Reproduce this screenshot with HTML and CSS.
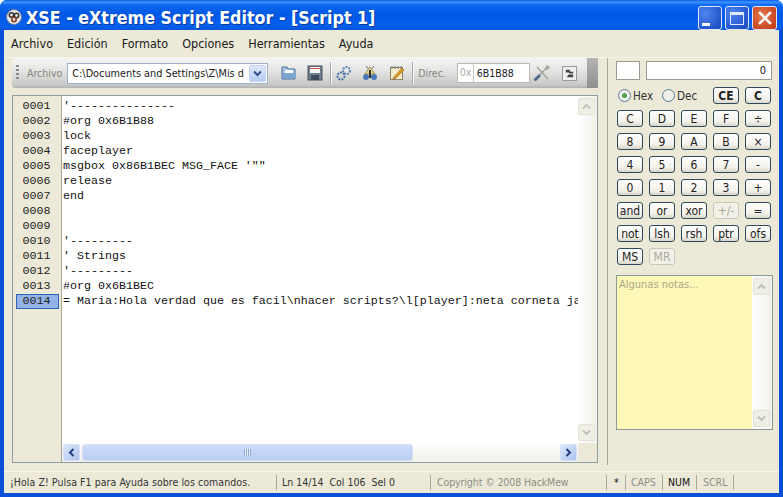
FILE: index.html
```html
<!DOCTYPE html>
<html lang="es">
<head>
<meta charset="utf-8">
<title>XSE - eXtreme Script Editor</title>
<link rel="stylesheet" href="styles.css">
</head>
<body>
<div class="window">
  <header class="titlebar">
    <svg class="app-icon" viewBox="0 0 16 16" width="16" height="16"><circle cx="8" cy="8" r="7.5" fill="#e8e8e8" stroke="#6a7a9a"/><circle cx="5.5" cy="6" r="2.2" fill="none" stroke="#333" stroke-width="1.6"/><circle cx="10.5" cy="6.5" r="2.2" fill="none" stroke="#333" stroke-width="1.6"/><circle cx="8" cy="10.5" r="2.2" fill="none" stroke="#8a3a20" stroke-width="1.6"/></svg>
    <span class="title-text">XSE - eXtreme Script Editor - [Script 1]</span>
    <div class="caption-buttons">
      <div class="cap cap-blue"><span class="cap-min"></span></div>
      <div class="cap cap-blue"><span class="cap-max"></span></div>
      <div class="cap cap-red"><svg viewBox="0 0 14 14" width="14" height="14"><path d="M2 2l10 10M12 2L2 12" stroke="#fff" stroke-width="2.6" stroke-linecap="square"/></svg></div>
    </div>
  </header>
  <div class="client">
    <nav class="menubar">
      <span>Archivo</span><span>Edición</span><span>Formato</span><span>Opciones</span><span>Herramientas</span><span>Ayuda</span>
    </nav>
    <div class="workspace">
      <div class="left">
        <div class="toolbar">
          <span class="grip"></span>
          <span class="tb-label tb-archivo">Archivo</span>
          <div class="combo"><span class="combo-text">C:\Documents and Settings\Z\Mis d</span><span class="combo-btn"><svg viewBox="0 0 9 7" width="9" height="7"><path d="M1 1.5l3.5 3.5L8 1.5" fill="none" stroke="#33508c" stroke-width="2"/></svg></span></div>
          <svg class="ico ico-folder" viewBox="0 0 16 16" width="16" height="16"><path d="M1 2h5l1 2h7v10H1z" fill="#a9c3e0" stroke="#4a6f99"/><rect x="4" y="5" width="8" height="3" fill="#fff"/><rect x="1.5" y="8" width="13" height="5.5" fill="#7ba6d2"/></svg>
          <svg class="ico ico-floppy" viewBox="0 0 16 16" width="16" height="16"><rect x="1" y="1" width="14" height="14" fill="#6f7f92" stroke="#47505c"/><rect x="3" y="2" width="10" height="6" fill="#f4f4f4"/><rect x="3" y="3" width="10" height="1" fill="#d9534f"/><rect x="4" y="10" width="8" height="5" fill="#3d4a5a"/></svg>
          <span class="tb-sep"></span>
          <svg class="ico ico-gears" viewBox="0 0 16 16" width="16" height="16"><circle cx="10.5" cy="5.5" r="3.5" fill="none" stroke="#5b86b8" stroke-width="2" stroke-dasharray="2 1"/><circle cx="5" cy="11" r="3.5" fill="none" stroke="#4a74a8" stroke-width="2" stroke-dasharray="2 1"/></svg>
          <svg class="ico ico-bug" viewBox="0 0 16 16" width="16" height="16"><path d="M4 1l3 4M12 1L9 5" stroke="#777"/><path d="M8 2L3 9h10z" fill="#e8d89a" stroke="#a58f4a"/><circle cx="4" cy="12" r="3" fill="#4a78b8"/><circle cx="12" cy="12" r="3" fill="#4a78b8"/><rect x="7" y="5" width="2" height="8" fill="#333"/></svg>
          <svg class="ico ico-note" viewBox="0 0 16 16" width="16" height="16"><rect x="1.5" y="2.5" width="12" height="12" fill="#f4ecc8" stroke="#8b8468"/><path d="M3 1v3M6 1v3M9 1v3M12 1v3" stroke="#777"/><path d="M5 12l8-9 2 2-8 8-3 1z" fill="#e0a020" stroke="#8a5a10" stroke-width=".6"/></svg>
          <span class="tb-sep tb-sep2"></span>
          <span class="tb-label tb-direc">Direc.</span>
          <div class="addr"><span class="addr-prefix">0x</span><span class="addr-value">6B1B88</span></div>
          <svg class="ico ico-tools" viewBox="0 0 16 16" width="16" height="16"><path d="M3 2l11 12" stroke="#a4a4a0" stroke-width="1.6"/><path d="M14 2L4 11" stroke="#a4a4a0" stroke-width="1.6"/><path d="M1.5 14.5l3.5-3.5" stroke="#50688c" stroke-width="3" stroke-linecap="round"/><circle cx="13.5" cy="2.5" r="1.6" fill="none" stroke="#8a8a86"/></svg>
          <div class="ico-box"><svg viewBox="0 0 12 12" width="11" height="11"><path d="M2 2h4l1 2h3v2H6L5 5H2zM5 7h5v3H3z" fill="#444"/></svg></div>
          <span class="tb-end"></span>
        </div>
        <div class="editor">
          <div class="editor-top">
            <div class="gutter">
              <div>0001</div><div>0002</div><div>0003</div><div>0004</div><div>0005</div><div>0006</div><div>0007</div><div>0008</div><div>0009</div><div>0010</div><div>0011</div><div>0012</div><div>0013</div><div class="active">0014</div>
            </div>
            <div class="code-wrap">
              <pre class="code">'---------------
#org 0x6B1B88
lock
faceplayer
msgbox 0x86B1BEC MSG_FACE '""
release
end


'---------
' Strings
'---------
#org 0x6B1BEC
= Maria:Hola verdad que es facil\nhacer scripts?\l[player]:neta corneta ja</pre>
            </div>
            <div class="vscroll">
              <span class="sb-btn sb-off"><svg viewBox="0 0 9 7" width="9" height="7"><path d="M1 5.5L4.5 2 8 5.5" fill="none" stroke="#c2c2b8" stroke-width="2"/></svg></span>
              <span class="sb-btn sb-off"><svg viewBox="0 0 9 7" width="9" height="7"><path d="M1 1.5L4.5 5 8 1.5" fill="none" stroke="#c2c2b8" stroke-width="2"/></svg></span>
            </div>
          </div>
          <div class="editor-bottom">
            <div class="gutter-foot"></div>
            <div class="hscroll">
              <span class="sb-btn sb-on"><svg viewBox="0 0 7 9" width="7" height="9"><path d="M5.5 1L2 4.5 5.5 8" fill="none" stroke="#25407a" stroke-width="2"/></svg></span>
              <span class="thumb"><span class="thumb-grip"></span></span>
              <span class="sb-btn sb-on"><svg viewBox="0 0 7 9" width="7" height="9"><path d="M1.5 1L5 4.5 1.5 8" fill="none" stroke="#25407a" stroke-width="2"/></svg></span>
            </div>
            <div class="corner"></div>
          </div>
        </div>
      </div>
      <aside class="calc">
        <div class="display"><div class="disp-mem"></div><div class="disp-val">0</div></div>
        <div class="keys">
          <div class="radios">
            <label class="radio"><span class="dot on"></span>Hex</label>
            <label class="radio"><span class="dot"></span>Dec</label>
          </div>
          <button class="key bold">CE</button><button class="key bold">C</button>
          <button class="key">C</button><button class="key">D</button><button class="key">E</button><button class="key">F</button><button class="key">÷</button>
          <button class="key">8</button><button class="key">9</button><button class="key">A</button><button class="key">B</button><button class="key">×</button>
          <button class="key">4</button><button class="key">5</button><button class="key">6</button><button class="key">7</button><button class="key">-</button>
          <button class="key">0</button><button class="key">1</button><button class="key">2</button><button class="key">3</button><button class="key">+</button>
          <button class="key">and</button><button class="key">or</button><button class="key">xor</button><button class="key off">+/-</button><button class="key">=</button>
          <button class="key">not</button><button class="key">lsh</button><button class="key">rsh</button><button class="key">ptr</button><button class="key">ofs</button>
          <button class="key">MS</button><button class="key off">MR</button>
        </div>
        <div class="notes">
          <div class="notes-text">Algunas notas...</div>
          <div class="vscroll notes-scroll">
            <span class="sb-btn sb-off"><svg viewBox="0 0 9 7" width="9" height="7"><path d="M1 5.5L4.5 2 8 5.5" fill="none" stroke="#c2c2b8" stroke-width="2"/></svg></span>
            <span class="sb-btn sb-off"><svg viewBox="0 0 9 7" width="9" height="7"><path d="M1 1.5L4.5 5 8 1.5" fill="none" stroke="#c2c2b8" stroke-width="2"/></svg></span>
          </div>
        </div>
      </aside>
    </div>
    <footer class="statusbar">
      <span class="st st-msg">¡Hola Z! Pulsa F1 para Ayuda sobre los comandos.</span>
      <span class="st st-pos">Ln 14/14 &nbsp;Col 106 &nbsp;Sel 0</span>
      <span class="st st-copy">Copyright © 2008 HackMew</span>
      <span class="st st-star">*</span>
      <span class="st st-caps">CAPS</span>
      <span class="st st-num">NUM</span>
      <span class="st st-scrl">SCRL</span>
    </footer>
  </div>
</div>
</body>
</html>
```
FILE: styles.css
```css
* { box-sizing: border-box; }
html, body { margin: 0; padding: 0; background: #fff; }
body { width: 783px; height: 497px; overflow: hidden; font-family: "DejaVu Sans Condensed", "DejaVu Sans", sans-serif; font-size: 10.5px; color: #222; }
.window { width: 783px; height: 497px; display: flex; flex-direction: column; background: #0a4fd8; border-radius: 7px 7px 0 0; overflow: hidden; }
.titlebar { height: 30px; flex: none; display: flex; align-items: center; padding-left: 6px; background: linear-gradient(#0a5ae6 0, #3d95ff 2px, #0e68f0 5px, #0058e4 14px, #0560ee 26px, #0a54d8 30px); color: #fff; }
.app-icon { flex: none; margin-top: 4px; }
.title-text { margin: 5px 0 0 4px; font: bold 17.7px "DejaVu Sans Condensed", sans-serif; text-shadow: 1px 1px 0 #0a3a9a; white-space: nowrap; }
.caption-buttons { margin-left: auto; margin-right: 6px; margin-top: 6px; display: flex; gap: 3px; }
.cap { width: 24px; height: 24px; border: 1px solid #dfe8fb; border-radius: 3px; display: flex; align-items: center; justify-content: center; }
.cap-blue { background: radial-gradient(circle at 30% 30%, #4f86ee, #1f50c8 80%); }
.cap-red { width: 25px; background: radial-gradient(circle at 40% 40%, #e4794f, #c33d18 85%); }
.cap-min { width: 8px; height: 3px; background: #fff; margin: 12px 8px 0 0; }
.cap-max { width: 14px; height: 13px; border: 1px solid #dde8ff; border-top-width: 3px; }
.client { flex: 1; min-height: 0; margin: 0 4px 4px; background: #ece9d8; display: flex; flex-direction: column; }
.menubar { height: 28px; flex: none; display: flex; gap: 14px; align-items: center; padding: 0 0 0 7px; border-bottom: 1px solid #f6f4ea; font-size: 12.5px; color: #1a1a1a; }
.workspace { flex: 1; min-height: 0; display: flex; padding-left: 8px; }
.left { width: 586px; flex: none; display: flex; flex-direction: column; }
.toolbar { height: 30px; flex: none; display: flex; align-items: center; position: relative; background: linear-gradient(#f4f4f2, #e6e6e4 40%, #c8c8c6 90%, #b0b0ae); border-radius: 4px 0 0 4px; color: #888; }
.grip { width: 3px; height: 16px; margin-left: 4px; background: repeating-linear-gradient(#888 0 2px, transparent 2px 4px); flex: none; }
.tb-label { flex: none; color: #85857e; }
.tb-archivo { margin-left: 8px; }
.combo { flex: none; width: 201px; height: 21px; margin-left: 5px; background: #fff; border: 1px solid #9db2c8; display: flex; align-items: center; overflow: hidden; color: #222; font-size: 10.8px; }
.combo-text { flex: 1; min-width: 0; padding-left: 4px; white-space: nowrap; overflow: hidden; }
.combo-btn { width: 17px; height: 17px; margin-right: 1px; flex: none; background: linear-gradient(#dfe8fb, #b8cdf2); border: 1px solid #c4d3f0; border-radius: 2px; display: flex; align-items: center; justify-content: center; }
.ico { flex: none; }
.ico-folder { margin-left: 13px; }
.ico-floppy { margin-left: 10px; }
.tb-sep { width: 2px; height: 22px; flex: none; margin-left: 7px; background: linear-gradient(90deg, #a8a8a6 50%, #fafafa 50%); }
.ico-gears { margin-left: 4px; }
.ico-bug { margin-left: 10px; }
.ico-note { margin-left: 11px; }
.tb-sep2 { margin-left: 7px; }
.tb-direc { margin-left: 4px; }
.addr { flex: none; width: 73px; height: 20px; margin-left: 11px; display: flex; border: 1px solid #b8b8b4; background: #fff; align-items: center; }
.addr-prefix { width: 16px; padding-left: 2px; color: #a8a8a8; border-right: 1px solid #c8c8c4; height: 100%; line-height: 17px; flex: none; }
.addr-value { padding-left: 3px; color: #222; }
.ico-tools { margin-left: 4px; }
.ico-box { flex: none; width: 15px; height: 15px; margin-left: 12px; background: #eee; border: 1px solid #999; display: flex; align-items: center; justify-content: center; }
.tb-end { position: absolute; right: 0; top: 0; bottom: 0; width: 11px; background: linear-gradient(#b4b4b2, #8f8f8d); }
.editor { margin-top: 7px; height: 368px; flex: none; border: 1px solid #8d9da6; background: #fff; display: flex; flex-direction: column; }
.editor-top { flex: 1; min-height: 0; display: flex; }
.gutter { width: 49px; flex: none; background: #ece9d8; border-right: 1px solid #a9a696; padding: 3px 2px 0 3px; font: 11.67px/15px "Liberation Mono", monospace; text-align: center; color: #222; }
.gutter div { height: 15px; padding-right: 2px; }
.gutter .active { background: #93b4e8; border: 1px solid #2f63b8; line-height: 13px; }
.code-wrap { flex: 1; min-width: 0; overflow: hidden; padding: 3px 0 0 1px; }
.code { margin: 0; font: 11.67px/15px "Liberation Mono", monospace; color: #111; white-space: pre; }
.vscroll { width: 19px; flex: none; padding: 2px 2px 2px 0; display: flex; flex-direction: column; justify-content: space-between; background: linear-gradient(90deg, #fff, #f2f1ea); }
.sb-btn { width: 17px; height: 17px; flex: none; display: flex; align-items: center; justify-content: center; border-radius: 2px; }
.sb-off { background: #f0efe6; border: 1px solid #e4e2d6; }
.sb-on { background: linear-gradient(135deg, #dbe6fb, #aec4ef); border: 1px solid #d6e2f8; }
.editor-bottom { height: 19px; flex: none; display: flex; }
.gutter-foot { width: 49px; flex: none; background: #ece9d8; border-right: 1px solid #a9a696; }
.hscroll { flex: 1; min-width: 0; padding: 1px; display: flex; gap: 2px; background: linear-gradient(#fff, #f0efe8); }
.thumb { width: 331px; margin-right: auto; flex: none; background: linear-gradient(#cfdcf8, #b9cdf4); border: 1px solid #d4e0f8; border-radius: 3px; display: flex; align-items: center; justify-content: center; }
.thumb-grip { width: 7px; height: 7px; background: repeating-linear-gradient(90deg, #8fa8da 0 1px, #e8effc 1px 2px); }
.corner { width: 19px; flex: none; background: #ece9d8; }
.calc { width: 174px; margin-left: 9px; padding: 3px 0 0 8px; border-left: 1px solid #aca899; flex: none; height: 407px; display: flex; flex-direction: column; }
.display { display: flex; gap: 6px; height: 19px; flex: none; }
.disp-mem { width: 24px; background: #fff; border: 1px solid #9a9c90; }
.disp-val { width: 126px; background: #fff; border: 1px solid #9a9c90; text-align: right; padding-right: 5px; line-height: 17px; color: #222; font-size: 11px; }
.keys { margin: 7px 0 0 1px; display: grid; grid-template-columns: repeat(5, 26px); grid-auto-rows: 17px; column-gap: 6px; row-gap: 6px; }
.radios { grid-column: 1 / 4; display: flex; gap: 9px; padding-left: 1px; }
.radio { display: flex; align-items: center; gap: 2px; white-space: nowrap; font-size: 11.5px; color: #333; }
.dot { width: 13px; height: 13px; border-radius: 50%; border: 1px solid #5a7a9a; background: #f0f0ea; position: relative; flex: none; }
.dot.on::after { content: ""; position: absolute; left: 3px; top: 3px; width: 5px; height: 5px; border-radius: 50%; background: #4aa04a; }
.key { padding: 0; font: 12px "DejaVu Sans Condensed", sans-serif; height: 17px; background: linear-gradient(#fff, #f2f1ea 70%, #d8d6c8); border: 1px solid #2f4a5a; border-radius: 3px; color: #222; }
.key.bold { font-weight: bold; }
.key.off { border-color: #c8c6b8; color: #aca899; background: #f2f1e8; }
.notes { margin-top: 10px; width: 157px; height: 155px; flex: none; background: #fef8b8; border: 1px solid #8a9a96; display: flex; }
.notes-text { flex: 1; padding: 2px; color: #a8a888; font-size: 11px; }
.notes-scroll { width: 20px; padding: 2px 1px; }
.statusbar { height: 22px; flex: none; border-top: 1px solid #f8f6ec; display: flex; align-items: center; background: #ece9d8; }
.st { white-space: nowrap; flex: none; height: 15px; line-height: 15px; border-right: 1px solid #aca899; }
.st-msg { margin-left: 6px; width: 267px; color: #333; letter-spacing: .06px; }
.st-pos { width: 154px; padding-left: 5px; color: #333; }
.st-copy { width: 176px; padding-left: 6px; color: #8e8e84; letter-spacing: -.1px; }
.st-star { width: 19px; padding-left: 7px; color: #111; }
.st-caps { width: 37px; padding-left: 5px; color: #8e8e84; }
.st-num { width: 34px; padding-left: 5px; color: #111; }
.st-scrl { width: 37px; padding-left: 6px; color: #8e8e84; }
```
